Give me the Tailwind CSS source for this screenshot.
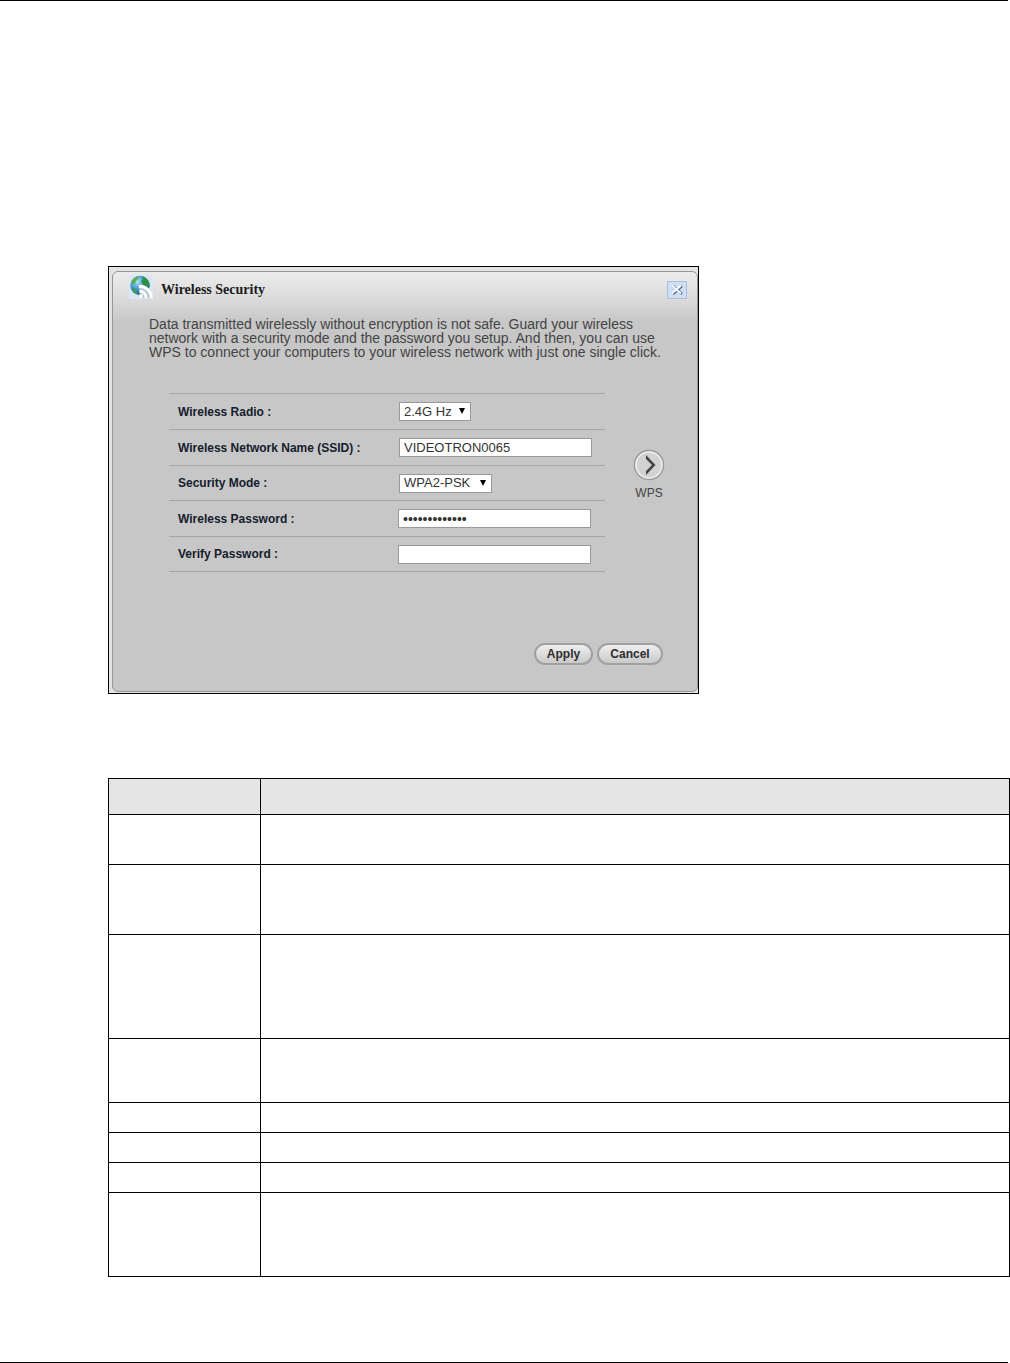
<!DOCTYPE html>
<html lang="en">
<head>
    <meta charset="UTF-8">
    <meta name="viewport" content="width=device-width, initial-scale=1.0">
    <title>Wireless Security</title>
    <script src="https://cdn.jsdelivr.net/npm/@tailwindcss/browser@4"></script>
</head>
<body class="bg-white text-black font-['Liberation_Sans',Arial,sans-serif]">
    <hr class="mr-0.5 border-t border-black">

    <main class="pl-[108px] pt-[265px] pb-[85px]">
        <!-- Wireless security dialog -->
        <section class="w-full max-w-[591px] border border-black bg-[#e4e4e2] pt-1 pl-[3px] pb-px">
            <form class="rounded-md border border-[#979797] bg-[#c7c7c7] bg-linear-to-b from-[#ececec] from-0% via-[#dadada] via-[28px] to-[#c7c7c7] to-[50px] pb-[26px]" onsubmit="return false">
                <header class="flex items-start justify-between pl-4 pr-2.5">
                    <div class="flex items-center gap-2">
                        <svg class="mt-0.5 h-6 w-6" viewBox="0 0 24 24" aria-hidden="true">
                            <defs>
                                <radialGradient id="globe" cx="35%" cy="30%" r="75%">
                                    <stop offset="0" stop-color="#b5e4f8"/>
                                    <stop offset="0.5" stop-color="#3f97d3"/>
                                    <stop offset="1" stop-color="#155596"/>
                                </radialGradient>
                            </defs>
                            <rect width="24" height="24" fill="#dce6f2"/>
                            <circle cx="11" cy="10.5" r="9.7" fill="url(#globe)"/>
                            <path d="M2.500 6C4.500 2.500 8 1 10 1l-1 3-2 2-1 3-3 1z" fill="#58b05a"/>
                            <path d="M13 1.200c4 1 7 4.300 7.500 8l-2 3-4-2-2.500-4 2-2z" fill="#2c9142"/>
                            <path d="M3 13l4 1 1 3v2.500c-2.500-1-4.500-3.500-5-6.500z" fill="#3c9c50"/>
                            <path d="M9 10C17 9 23.500 15 24 23h-13c-2-1-2-3 0-4z" fill="#aabccb"/>
                            <path d="M10 11.500A11.500 11.500 0 0 1 22.300 23M10.500 16.500A6 6 0 0 1 17 23" fill="none" stroke="#fff" stroke-width="3.2"/>
                            <circle cx="12" cy="21.3" r="2" fill="#fff"/>
                        </svg>
                        <h1 class="mt-2 font-['Liberation_Serif',serif] text-sm font-bold leading-5 text-[#1c1c1c]">Wireless Security</h1>
                    </div>
                    <button type="button" aria-label="Close" class="mt-[9px] flex h-[18px] w-5 items-center justify-center border border-[#a9bfdc] bg-[#cfdff3]">
                        <svg class="h-3 w-3" viewBox="0 0 12 12" fill="none" aria-hidden="true">
                            <path d="M2 2l9 8M11 2l-9 8" stroke="#506a90" stroke-width="2.5"/>
                            <path d="M1 1.500l9 8M10 1.500l-9 8" stroke="#fff" stroke-width="1.8"/>
                        </svg>
                    </button>
                </header>

                <p class="mt-[17px] pl-9 pr-4 text-sm leading-[14px] text-[#444]">
                    Data transmitted wirelessly without encryption is not safe. Guard your wireless<br>
                    network with a security mode and the password you setup. And then, you can use<br>
                    WPS to connect your computers to your wireless network with just one single click.
                </p>

                <div class="mt-[34px] flex items-start gap-7 pl-14 pr-8">
                    <div class="grow border-t border-[#a6a6a6] text-[13px] text-[#333]">
                        <div class="flex h-9 items-center border-b border-[#a6a6a6] pl-[9px]">
                            <label for="radio" class="w-[221px] text-xs font-bold text-[#14202c]">Wireless Radio :</label>
                            <div class="relative">
                                <select id="radio" class="block h-[19px] w-[72px] appearance-none border border-[#999] bg-white pl-1 leading-4">
                                    <option>2.4G Hz</option>
                                    <option>5G Hz</option>
                                </select>
                                <svg class="pointer-events-none absolute top-1.5 right-1.5 h-1.5 w-1.5" viewBox="0 0 6 6" aria-hidden="true"><path d="M0 0h6L3 6z" fill="#000"/></svg>
                            </div>
                        </div>
                        <div class="flex h-9 items-center border-b border-[#a6a6a6] pl-[9px]">
                            <label for="ssid" class="w-[221px] text-xs font-bold text-[#14202c]">Wireless Network Name (SSID) :</label>
                            <input id="ssid" type="text" value="VIDEOTRON0065" class="h-[19px] w-[193px] border border-[#999] bg-white pl-1">
                        </div>
                        <div class="flex h-[35px] items-center border-b border-[#a6a6a6] pl-[9px]">
                            <label for="mode" class="w-[221px] text-xs font-bold text-[#14202c]">Security Mode :</label>
                            <div class="relative">
                                <select id="mode" class="block h-[19px] w-[93px] appearance-none border border-[#999] bg-white pl-1 leading-4">
                                    <option>WPA2-PSK</option>
                                    <option>WPA-PSK</option>
                                </select>
                                <svg class="pointer-events-none absolute top-1.5 right-1.5 h-1.5 w-1.5" viewBox="0 0 6 6" aria-hidden="true"><path d="M0 0h6L3 6z" fill="#000"/></svg>
                            </div>
                        </div>
                        <div class="flex h-9 items-center border-b border-[#a6a6a6] pl-[9px]">
                            <label for="password" class="w-[220px] text-xs font-bold text-[#14202c]">Wireless Password :</label>
                            <input id="password" type="password" value="videotron0065" class="h-[19px] w-[193px] border border-[#999] bg-white pl-1 text-sm">
                        </div>
                        <div class="flex h-[35px] items-center border-b border-[#a6a6a6] pl-[9px]">
                            <label for="verify" class="w-[220px] text-xs font-bold text-[#14202c]">Verify Password :</label>
                            <input id="verify" type="password" class="h-[19px] w-[193px] border border-[#999] bg-white pl-1 text-sm">
                        </div>
                    </div>
                    <button type="button" class="mt-14 flex w-8 flex-col items-center gap-1 text-xs text-[#444]">
                        <svg class="h-8 w-8" viewBox="0 0 32 32" aria-hidden="true">
                            <circle cx="16" cy="16" r="14.5" fill="#d2d2d2" stroke="#999" stroke-width="1.5"/>
                            <circle cx="16" cy="16" r="13" fill="none" stroke="#eee" stroke-width="1.5"/>
                            <path d="M13 6l9.500 10-9.500 10v-4l6-6-6-6z" fill="#444"/>
                        </svg>
                        WPS
                    </button>
                </div>

                <div class="mt-[71px] flex justify-end gap-1 pr-[34px] text-xs font-bold text-[#2e2e2e]">
                    <button type="submit" class="h-[22px] w-[59px] rounded-full border-2 border-[#a0a0a0] bg-linear-to-b from-[#f0f0f0] to-[#c9c9c9]">Apply</button>
                    <button type="button" class="h-[22px] w-[66px] rounded-full border-2 border-[#a0a0a0] bg-linear-to-b from-[#f0f0f0] to-[#c9c9c9]">Cancel</button>
                </div>
            </form>
        </section>

        <!-- Field descriptions, not filled in yet -->
        <table class="mt-[84px] w-full table-fixed border-collapse border border-black">
            <colgroup>
                <col class="w-[152px]">
                <col>
            </colgroup>
            <thead>
                <tr class="h-9 bg-[#e5e5e5]"><th class="border border-black"></th><th class="border border-black"></th></tr>
            </thead>
            <tbody>
                <tr class="h-[50px]"><td class="border border-black"></td><td class="border border-black"></td></tr>
                <tr class="h-[70px]"><td class="border border-black"></td><td class="border border-black"></td></tr>
                <tr class="h-[104px]"><td class="border border-black"></td><td class="border border-black"></td></tr>
                <tr class="h-16"><td class="border border-black"></td><td class="border border-black"></td></tr>
                <tr class="h-[30px]"><td class="border border-black"></td><td class="border border-black"></td></tr>
                <tr class="h-[30px]"><td class="border border-black"></td><td class="border border-black"></td></tr>
                <tr class="h-[30px]"><td class="border border-black"></td><td class="border border-black"></td></tr>
                <tr class="h-[84px]"><td class="border border-black"></td><td class="border border-black"></td></tr>
            </tbody>
        </table>
    </main>

    <hr class="mr-0.5 border-t border-black">
</body>
</html>
